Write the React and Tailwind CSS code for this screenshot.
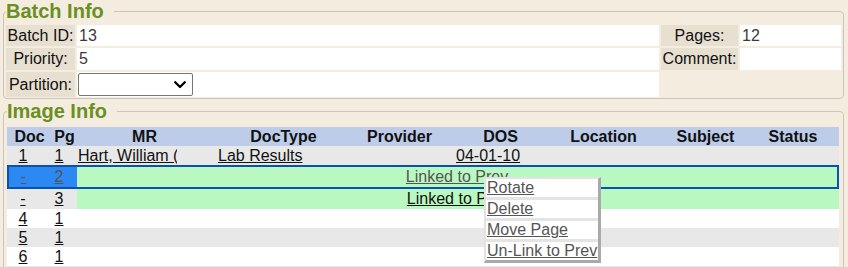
import React from "react";

const COLS = "grid grid-cols-[45px_25px_135px_143px_89px_113px_93px_111px_78px]";

function Chevron() {
  return (
    <svg width="12" height="8" viewBox="0 0 12 8" className="block">
      <path d="M1.2 1.2 L6 6 L10.8 1.2" fill="none" stroke="#000" strokeWidth="2.3" strokeLinecap="round" strokeLinejoin="round" />
    </svg>
  );
}

function PlainRow({ doc, pg, bg }) {
  return (
    <div className={`${COLS} h-[19px] leading-[19px] ${bg}`}>
      <div className="text-center pr-[13px]"><span className="underline">{doc}</span></div>
      <div className="text-center pr-[11px]"><span className="underline">{pg}</span></div>
      <div className="col-span-7" />
    </div>
  );
}

export default function App() {
  return (
    <div className="relative w-[848px] h-[267px] overflow-hidden bg-[#f4eddf] font-['Liberation_Sans',Arial,sans-serif] text-[16px] text-[#111]">
      {/* Batch Info */}
      <fieldset className="ml-[3px] mr-[4px] border border-[#cdc5bb] rounded-[4px] px-[2px] pt-[2px] pb-[1px]">
        <legend className="pr-[10px] text-[20px] leading-[23px] font-bold text-[#6a8f22]">Batch Info</legend>
        <div className="grid grid-cols-[69px_582px_77px_101px] grid-rows-[21px_22px_25px] gap-[2px]">
          <div className="bg-[#e7e0d1] flex items-center justify-center">Batch ID:</div>
          <div className="bg-white flex items-center pl-[2px] text-[#3a3a3a]">13</div>
          <div className="bg-[#e7e0d1] flex items-center justify-center">Pages:</div>
          <div className="bg-white flex items-center pl-[2px] text-[#3a3a3a]">12</div>

          <div className="bg-[#e7e0d1] flex items-center justify-center">Priority:</div>
          <div className="bg-white flex items-center pl-[2px] text-[#3a3a3a]">5</div>
          <div className="bg-[#e7e0d1] flex items-center justify-center">Comment:</div>
          <div className="bg-white" />

          <div className="bg-[#e7e0d1] flex items-center justify-center">Partition:</div>
          <div className="bg-white flex items-center pl-[1px]">
            <div className="w-[115px] h-[23px] border border-[#767676] rounded-[2px] bg-white flex items-center justify-end pr-[6px]">
              <Chevron />
            </div>
          </div>
          <div className="col-span-2" />
        </div>
      </fieldset>

      {/* Image Info */}
      <fieldset className="mt-[1px] ml-[3px] mr-[4px] border border-[#cdc5bb] rounded-[4px] pl-[3px] pr-[4px] pt-[4px] pb-[4px]">
        <legend className="pr-[10px] text-[20px] leading-[23px] font-bold text-[#6a8f22]">Image Info</legend>

        <div className={`${COLS} h-[19px] leading-[19px] bg-[#bdcce8] font-bold text-center`}>
          <div>Doc</div>
          <div>Pg</div>
          <div>MR</div>
          <div>DocType</div>
          <div>Provider</div>
          <div>DOS</div>
          <div>Location</div>
          <div>Subject</div>
          <div className="pr-[14px]">Status</div>
        </div>

        <div className={`${COLS} h-[19px] leading-[19px] bg-[#e8e8e8]`}>
          <div className="text-center pr-[13px]"><span className="underline">1</span></div>
          <div className="text-center pr-[11px]"><span className="underline">1</span></div>
          <div className="pl-[1px]">
            <div className="w-[99px] overflow-hidden whitespace-nowrap underline">Hart, William (</div>
          </div>
          <div className="pl-[6px] whitespace-nowrap"><span className="underline">Lab Results</span></div>
          <div />
          <div className="pl-[12px]"><span className="underline">04-01-10</span></div>
          <div />
          <div />
          <div />
        </div>

        <div className="h-[24px] border-2 border-[#0b52ad] flex leading-[20px] text-[#555]">
          <div className="w-[68px] bg-[#2c88f2] flex">
            <div className="w-[43px] text-center pr-[14px]"><span className="underline">-</span></div>
            <div className="w-[25px] text-center pr-[11px]"><span className="underline">2</span></div>
          </div>
          <div className="flex-1 bg-[#b9f9c1] text-center"><span className="underline">Linked to Prev</span></div>
        </div>

        <div className="h-[20px] flex leading-[20px]">
          <div className="w-[70px] bg-[#e8e8e8] flex">
            <div className="w-[45px] text-center pr-[13px]"><span className="underline">-</span></div>
            <div className="w-[25px] text-center pr-[11px]"><span className="underline">3</span></div>
          </div>
          <div className="flex-1 bg-[#b9f9c1] text-center"><span className="underline">Linked to Prev</span></div>
        </div>

        <PlainRow doc="4" pg="1" bg="bg-white" />
        <PlainRow doc="5" pg="1" bg="bg-[#e8e8e8]" />
        <PlainRow doc="6" pg="1" bg="bg-white" />
        <div className="h-[19px] bg-[#e8e8e8]" />
      </fieldset>

      {/* Context menu */}
      <div className="absolute left-[484px] top-[177px] w-[117px] flex flex-col gap-[3px] bg-[#e4e4e4] border-t-2 border-l-2 border-t-[#e2e2e2] border-l-[#e2e2e2] border-r-[3px] border-b-[3px] border-r-[#a9a9a9] border-b-[#a9a9a9]">
        {["Rotate", "Delete", "Move Page", "Un-Link to Prev"].map((t) => (
          <div key={t} className="h-[18px] leading-[18px] bg-white pl-[1px] overflow-hidden whitespace-nowrap text-[#555]">
            <span className="underline">{t}</span>
          </div>
        ))}
      </div>
    </div>
  );
}
